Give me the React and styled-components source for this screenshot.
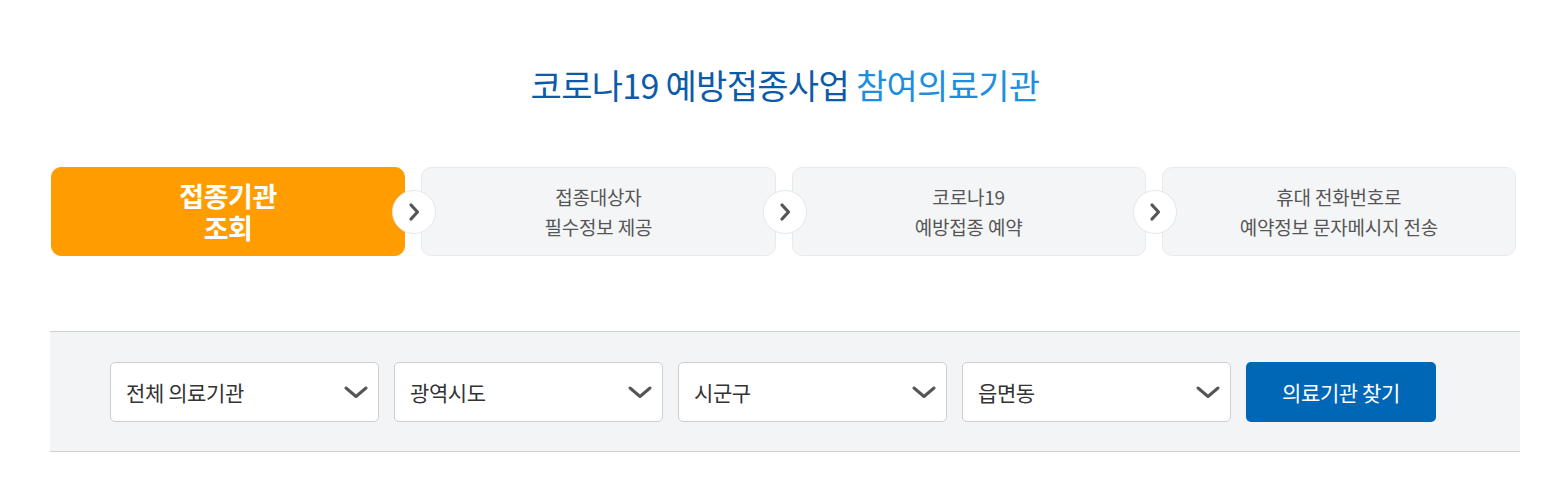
import React from "react";
import styled, { createGlobalStyle } from "styled-components";

const GlobalStyle = createGlobalStyle`
  * { box-sizing: border-box; }
  body {
    margin: 0;
    background: #fff;
    font-family: "Noto Sans CJK KR", "Noto Sans", sans-serif;
  }
`;

const Page = styled.div`
  width: 1557px;
  padding: 0 37px 0 50px;
`;

const Title = styled.h1`
  margin: 0;
  padding-top: 60px;
  height: 167px;
  text-align: center;
  font-size: 34px;
  font-weight: 400;
  letter-spacing: -0.7px;
  line-height: 50px;
  color: #0d5ba8;
`;

const Accent = styled.span`
  color: #1e8fe0;
`;

const Steps = styled.ol`
  list-style: none;
  margin: 0;
  padding: 0 4px 0 1px;
  display: grid;
  grid-template-columns: repeat(4, 1fr);
  gap: 16px;
`;

const Step = styled.li`
  position: relative;
  height: 89px;
  border-radius: 10px;
  display: flex;
  align-items: center;
  justify-content: center;
  text-align: center;
  background: ${(p) => (p.$active ? "#ff9d00" : "#f4f5f7")};
  border: 1px solid ${(p) => (p.$active ? "#ff9d00" : "#e9eaee")};
  color: ${(p) => (p.$active ? "#fff" : "#555")};
  font-size: ${(p) => (p.$active ? "27px" : "19px")};
  font-weight: ${(p) => (p.$active ? 700 : 400)};
  line-height: ${(p) => (p.$active ? "32px" : "30px")};
  letter-spacing: ${(p) => (p.$active ? "-0.4px" : "-0.2px")};
`;

const Arrow = styled.span`
  position: absolute;
  left: -30px;
  top: 50%;
  margin-top: -22px;
  width: 44px;
  height: 44px;
  border-radius: 50%;
  background: #fff;
  border: 1px solid #e6e7ea;
  display: flex;
  align-items: center;
  justify-content: center;
  z-index: 1;
`;

const Panel = styled.div`
  margin-top: 75px;
  height: 121px;
  background: #f3f4f6;
  border-top: 1px solid #cfd0d3;
  border-bottom: 1px solid #cfd0d3;
  display: flex;
  align-items: center;
  gap: 15px;
  padding-left: 60px;
`;

const Select = styled.div`
  width: 269px;
  height: 60px;
  background: #fff;
  border: 1px solid #cdced2;
  border-radius: 5px;
  display: flex;
  align-items: center;
  justify-content: space-between;
  padding: 0 9px 0 15px;
  font-size: 21px;
  color: #333;
  letter-spacing: -0.4px;
`;

const Button = styled.button`
  width: 190px;
  height: 60px;
  border: 0;
  border-radius: 5px;
  background: #0067b7;
  color: #fff;
  font-family: inherit;
  font-size: 21px;
  letter-spacing: -0.4px;
  cursor: pointer;
`;

const ChevronRight = () => (
  <svg width="14" height="20" viewBox="0 0 14 20">
    <path d="M4 3 L10.5 10 L4 17" fill="none" stroke="#555" strokeWidth="3.2" strokeLinecap="round" strokeLinejoin="round" />
  </svg>
);

const ChevronDown = () => (
  <svg width="26" height="14" viewBox="0 0 26 14">
    <path d="M3 3 L13 11.5 L23 3" fill="none" stroke="#555" strokeWidth="3" strokeLinecap="round" strokeLinejoin="round" />
  </svg>
);

const steps = [
  ["접종기관", "조회"],
  ["접종대상자", "필수정보 제공"],
  ["코로나19", "예방접종 예약"],
  ["휴대 전화번호로", "예약정보 문자메시지 전송"],
];

const selects = ["전체 의료기관", "광역시도", "시군구", "읍면동"];

export default function App() {
  return (
    <Page>
      <GlobalStyle />
      <Title>
        코로나19 예방접종사업 <Accent>참여의료기관</Accent>
      </Title>
      <Steps>
        {steps.map((s, i) => (
          <Step key={i} $active={i === 0}>
            {i > 0 && (
              <Arrow>
                <ChevronRight />
              </Arrow>
            )}
            <span>
              {s[0]}
              <br />
              {s[1]}
            </span>
          </Step>
        ))}
      </Steps>
      <Panel>
        {selects.map((s) => (
          <Select key={s}>
            {s}
            <ChevronDown />
          </Select>
        ))}
        <Button>의료기관 찾기</Button>
      </Panel>
    </Page>
  );
}
